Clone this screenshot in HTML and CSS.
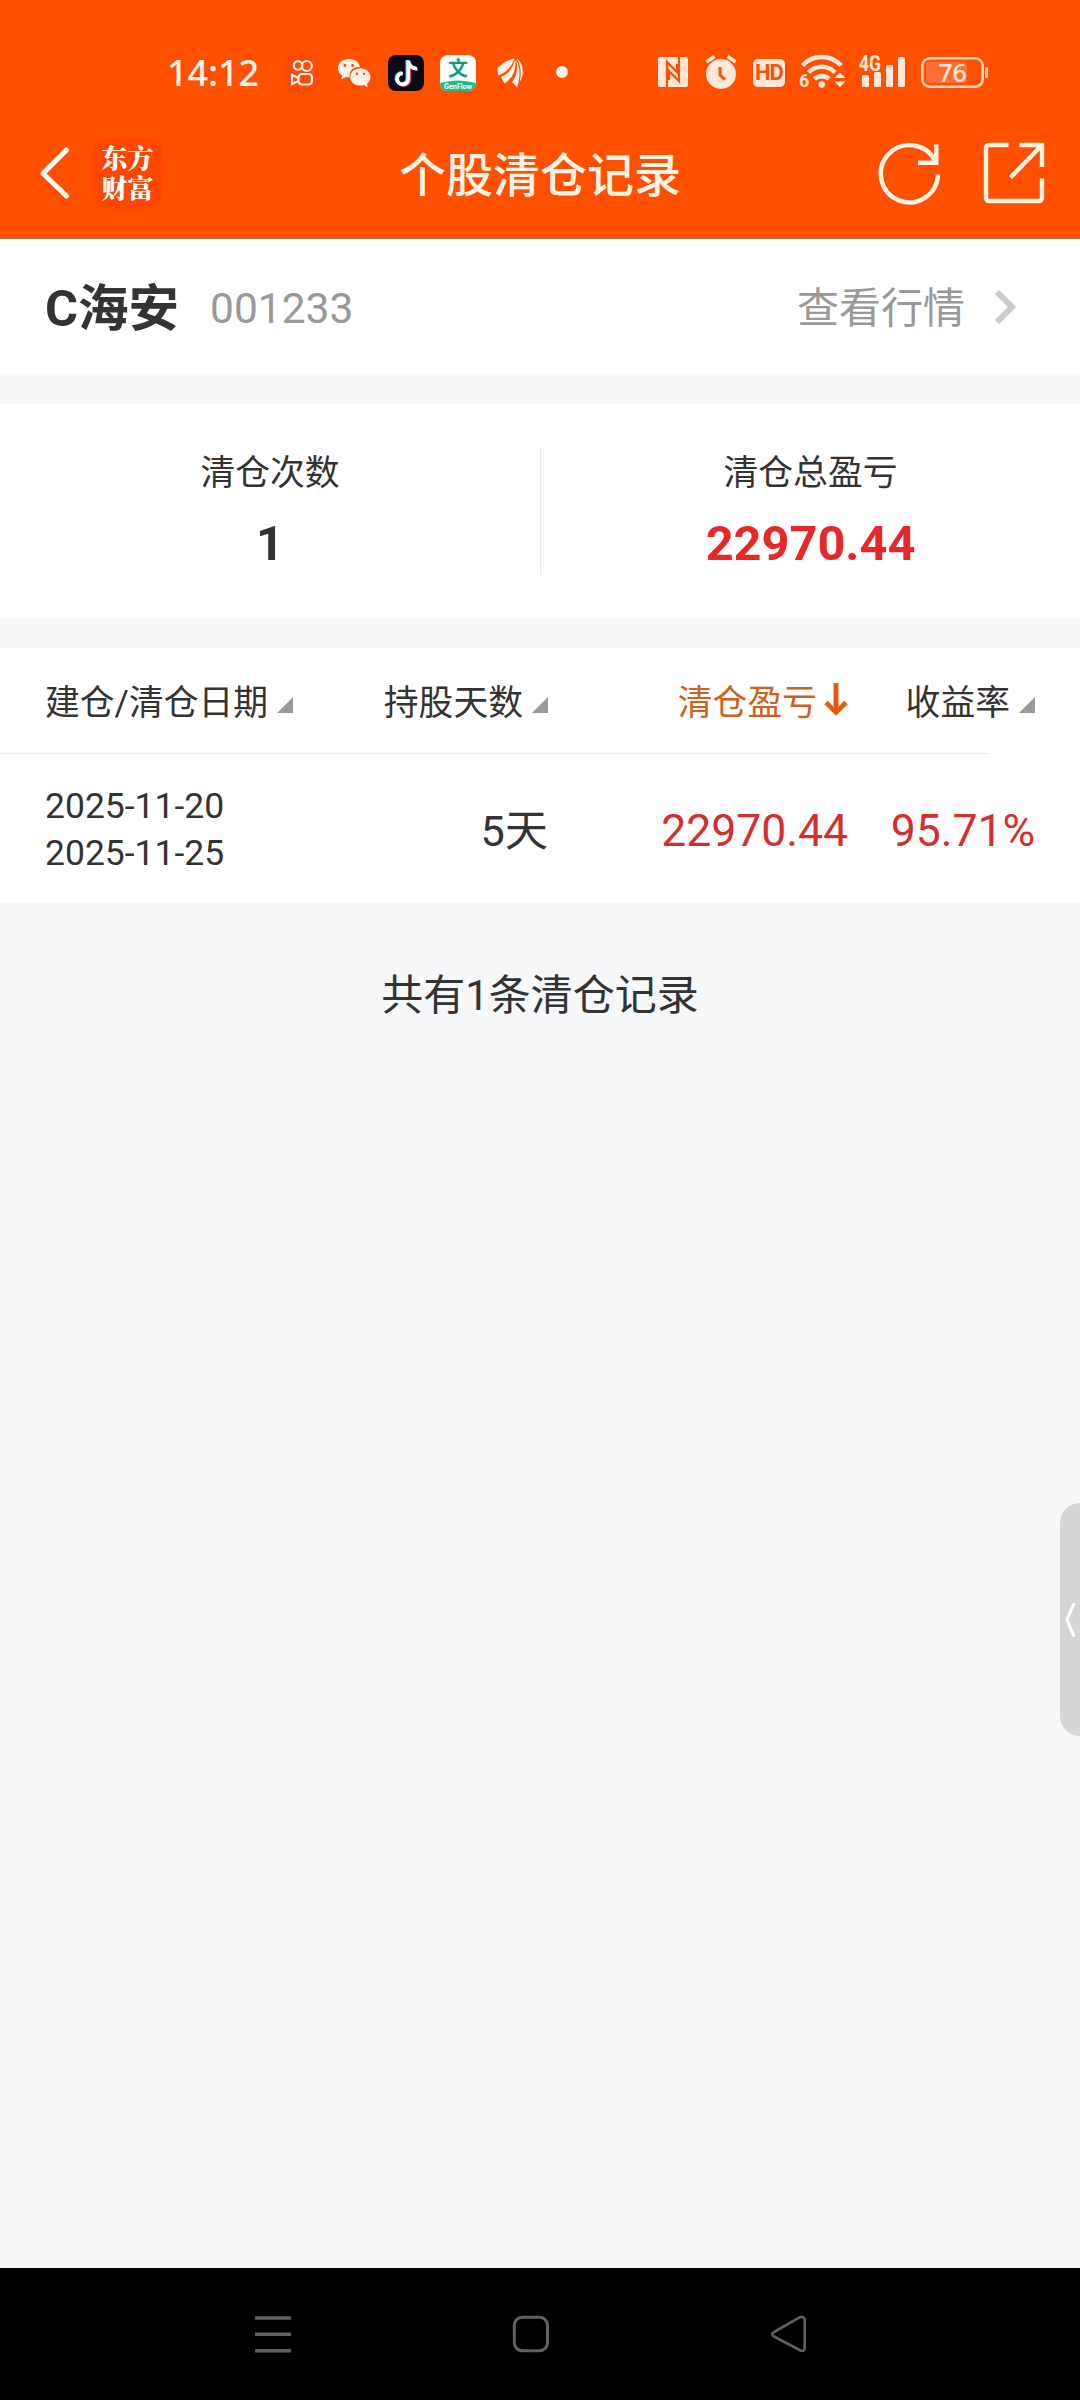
FILE: index.html
```html
<!DOCTYPE html>
<html lang="zh-CN">
<head>
<meta charset="utf-8">
<title>个股清仓记录</title>
<link rel="stylesheet" href="styles.css">
</head>
<body>
<div class="screen">
  <header class="top">
    <div class="status">
      <span class="time">14:12</span>
      <svg class="i-ks" width="36" height="36" viewBox="0 0 36 36" fill="none" stroke="#fff3ea" stroke-width="2.200"><rect width="36" height="36" rx="8" fill="#ff4906" stroke="none"/><circle cx="14" cy="10.500" r="4.300"/><circle cx="22.800" cy="11" r="5"/><rect x="14.500" y="19" width="13.500" height="10.500" rx="3.500"/><path d="M14.500 23 8 20v9l6.500-3"/></svg>
      <svg class="i-wx" width="35" height="36" viewBox="0 0 35 36"><path fill="#fff3ea" d="M12 4C5.400 4 1 8.200 1 13.200c0 3 1.600 5.600 4.200 7.300L4.300 24.500l4.300-2.400c1.300.3 2.400.4 3.900.4C12 15 17 11.600 23 11.800 21.800 7 17.500 4 12 4z"/><path fill="#fff3ea" d="M23.300 13.200c-5.600 0-10 3.800-10 8.700s4.400 8.700 10 8.700c1.300 0 2.300-.1 3.400-.5l4.200 2.200-1-3.600c2.300-1.700 3.500-4 3.500-6.800 0-4.900-4.500-8.700-10.100-8.700z"/><g fill="#ff5000"><circle cx="8" cy="10.500" r="1.400"/><circle cx="15.500" cy="10.500" r="1.400"/><circle cx="20" cy="18.700" r="1.200"/><circle cx="27" cy="18.700" r="1.200"/></g></svg>
      <svg class="i-dy" width="36" height="36" viewBox="0 0 36 36" fill="none" stroke-width="3.600"><rect width="36" height="36" rx="8" fill="#0b0a16"/><g stroke="#3fe3df"><path d="M19.300 5v18.500a5.500 5.500 0 1 1-5.500-5.700M19.300 6c.8 4 4 6.600 8.500 7"/></g><g stroke="#f5335b"><path d="M21.300 6.500V25a5.700 5.700 0 0 1-9 4M21.300 7.500c.8 4 4 6.600 8.500 7"/></g><path stroke="#fff" d="M20.300 5.500v18.500a5.500 5.500 0 1 1-5.500-5.500M20.300 6c.8 4.500 4 7.500 8.700 7.700"/></svg>
      <svg class="i-wen" width="36" height="36" viewBox="0 0 36 36"><defs><clipPath id="app"><rect width="36" height="36" rx="8"/></clipPath></defs><g clip-path="url(#app)"><path fill="#fff" d="M0 0h36v36H0z"/><path fill="#1dbd8b" d="M0 28q18-5 36 0v8H0z"/></g><text x="18" y="20.500" text-anchor="middle" class="wen">文</text><text x="18" y="33.500" text-anchor="middle" textLength="28" lengthAdjust="spacingAndGlyphs" class="gen">GenFlow</text></svg>
      <svg class="i-wing" width="27" height="36" viewBox="0 0 27 36" fill="#fff0e4"><path d="M17.500 3.500C11 4.500 5 9 .5 12.500L1 20.500C9 18 14.500 12 17.500 3.500z"/><path d="M18.200 4.500C15.500 14.500 10 19.500 4 22l3.500 6.500C16 23 19.500 15 18.200 4.500z"/><path d="M19.200 4.500C21.200 14 19.500 21 15 27l5 5.500C23.500 22 23.500 13 19.200 4.500z"/><path d="M20 3.500C24 11 24.500 19 22.800 27 27.500 20 27 9 20 3.500z"/></svg>
      <span class="dot"></span>
      <svg class="i-nfc" width="30" height="30" viewBox="0 0 30 30"><rect width="30" height="30" rx="2.500" fill="#ffe7da"/><path d="M9 30V5l10 10V7M21 0v24L11 14v9" fill="none" stroke="#ff5000" stroke-width="2.200"/></svg>
      <svg class="i-alarm" width="32" height="34" viewBox="0 0 32 34"><circle cx="16" cy="19" r="15" fill="#ffe7da"/><path d="m1.500 7 8-5.500M30.500 7l-8-5.500" stroke="#ffe7da" stroke-width="3.400"/><path d="M15 12v8l5 4.500" fill="none" stroke="#ff5000" stroke-width="3"/></svg>
      <span class="hd">HD</span>
      <svg class="i-wifi" width="48" height="36" viewBox="0 0 48 36" fill="none" stroke="#ffe7da" stroke-width="4.600"><path d="M4.500 11.500a26 26 0 0 1 38.500 0M10.500 18.500a18 18 0 0 1 26.500 0M16.500 25a10.500 10.500 0 0 1 14.500 0"/><circle cx="23.700" cy="30.500" r="3.200" fill="#ffe7da" stroke="none"/><path d="m36.500 24 5.500-5.500 5.500 5.500zM36.500 27.500h11L42 33z" fill="#ffe7da" stroke="none"/><text x="1" y="33" class="six">6</text></svg>
      <svg class="i-sig" width="48" height="36" viewBox="0 0 48 36" fill="#ffe7da"><rect x="4" y="21" width="7" height="12" rx="1.500"/><rect x="16" y="18" width="7" height="15" rx="1.500"/><rect x="28" y="11" width="7" height="22" rx="1.500"/><rect x="40" y="3" width="7" height="30" rx="1.500"/><text x="1" y="16.500" class="fourg" textLength="22" lengthAdjust="spacingAndGlyphs">4G</text></svg>
      <svg class="i-bat" width="68" height="32" viewBox="0 0 68 32"><rect x="1.300" y="1.300" width="60.400" height="28.400" rx="7.500" fill="none" stroke="#ffd2b8" stroke-width="2.600"/><rect x="5" y="5" width="41" height="21" rx="3" fill="#ff6f33"/><rect x="64" y="10" width="3" height="11" rx="1.500" fill="#ffd2b8"/><text x="31.500" y="24.500" text-anchor="middle" class="pct">76</text></svg>
    </div>
    <div class="bar">
      <div class="bar-left">
        <svg width="30" height="54" viewBox="0 0 30 54" fill="none" stroke="#fff" stroke-width="5" stroke-linecap="round" stroke-linejoin="round"><path d="M26.500 4 3 27.500 26.500 50"/></svg>
        <div class="logo"><span>东方</span><span>财富</span></div>
      </div>
      <h1 class="title">个股清仓记录</h1>
      <div class="bar-right">
        <svg width="64" height="64" viewBox="0 0 64 64" fill="none" stroke="#fff3e6" stroke-width="4.400"><path d="M62 33.500A28.600 28.600 0 1 1 58.500 19"/><path d="M60.300 3.500v18.300H42"/></svg>
        <svg width="64" height="64" viewBox="0 0 64 64" fill="none" stroke="#fff3e6" stroke-width="4.400"><path d="M26.500 4H7a3 3 0 0 0-3 3v50a3 3 0 0 0 3 3h50a3 3 0 0 0 3-3V37.500" /><path d="M37.500 4H60v22M60 4 28.500 36.500"/></svg>
      </div>
    </div>
  </header>

  <section class="stock">
    <div class="stock-id"><span class="name">C海安</span><span class="code">001233</span></div>
    <div class="quote"><span>查看行情</span><svg width="24" height="38" viewBox="0 0 24 38" fill="none" stroke="#ccc" stroke-width="6"><path d="m4 4 15 15L4 34"/></svg></div>
  </section>

  <section class="totals">
    <div class="total"><span class="label">清仓次数</span><span class="value">1</span></div>
    <div class="total total-pl"><span class="label">清仓总盈亏</span><span class="value red">22970.44</span></div>
  </section>

  <section class="table">
    <div class="row head">
      <div class="c1">建仓/清仓日期<i class="tri"></i></div>
      <div class="c2">持股天数<i class="tri"></i></div>
      <div class="c3 sorted">清仓盈亏<svg width="24" height="36" viewBox="0 0 24 36" fill="none" stroke="#e65a0c" stroke-width="5"><path d="M12 1v29"/><path d="m2 20.500 10 10 10-10" stroke-width="4.600"/></svg></div>
      <div class="c4">收益率<i class="tri"></i></div>
    </div>
    <div class="rule"></div>
    <div class="row data">
      <div class="c1 dates"><span>2025-11-20</span><span>2025-11-25</span></div>
      <div class="c2">5天</div>
      <div class="c3 loss">22970.44</div>
      <div class="c4 loss">95.71%</div>
    </div>
  </section>

  <p class="count">共有1条清仓记录</p>

  <nav class="nav">
    <svg width="38" height="38" viewBox="0 0 38 38" stroke="#606060" stroke-width="3.500"><path d="M1 3h36M1 19.300h36M1 35.700h36"/></svg>
    <svg width="38" height="38" viewBox="0 0 38 38" fill="none" stroke="#606060" stroke-width="3"><rect x="2.300" y="2.300" width="33.200" height="33.400" rx="8"/></svg>
    <svg width="38" height="38" viewBox="0 0 38 38" fill="none" stroke="#606060" stroke-width="2.600" stroke-linejoin="round"><path d="M4 17 30 2.200Q34.500 1 34.700 5v28q-.3 3.800-4.200 2.500L4 21.500q-3.500-2.300 0-4.500z"/></svg>
  </nav>
  <div class="drawer"><svg width="12" height="38" viewBox="0 0 12 38" fill="none" stroke="#fff" stroke-width="3" stroke-linecap="round" stroke-linejoin="round"><path d="M9.500 3.500 3 18.500l6.500 16"/></svg></div>
</div>
</body>
</html>
```
FILE: styles.css
```css
* { box-sizing: border-box; }
body { margin: 0; }
.screen {
  position: relative;
  display: flex;
  flex-direction: column;
  width: 1080px;
  height: 2400px;
  overflow: hidden;
  background: #f6f8fa;
  color: #333;
  font-family: Roboto, "Noto Sans CJK SC", sans-serif;
}
.screen svg { display: block; flex: none; overflow: visible; }

.top { height: 239px; background: #ff5000; border-bottom: 1px solid #ad7047; }
.status { display: flex; height: 108px; padding: 55px 0 0 167px; }
.time {
  width: 93px;
  margin: -6px 24px 0 0;
  font: 500 36px/47px "Noto Sans", sans-serif;
  color: #fff3ea;
}
.i-wx { margin-left: 17px; }
.i-dy, .i-wen { margin-left: 16px; }
.i-wing { margin-left: 21px; }
.dot { width: 12px; height: 12px; margin: 11px 0 0 32px; border-radius: 50%; background: #fff3ea; }
.i-nfc { margin: 2px 0 0 90px; }
.i-alarm { margin-left: 17px; }
.hd {
  width: 32px;
  height: 28px;
  margin: 4px 0 0 16px;
  border-radius: 5px;
  background: #ffe7da;
  color: #ff5000;
  font: 700 22px/28px Roboto, sans-serif;
  letter-spacing: -1px;
  text-align: center;
}
.i-wifi { margin: -1px 0 0 13px; }
.i-sig { margin: -1px 0 0 12px; }
.i-bat { margin: 2px 0 0 15px; }
.wen { font: 700 20px "Noto Sans CJK SC", sans-serif; fill: #109b78; }
.gen { font: 700 7px Inter, sans-serif; fill: #fff; }
.six { font: 700 18px Roboto, sans-serif; fill: #ffe7da; stroke: none; }
.fourg { font: 700 22px Roboto, sans-serif; }
.pct { font: 500 25px "Noto Sans", sans-serif; fill: #ffe7da; }

.bar {
  display: grid;
  grid-template-columns: 300px 1fr 300px;
  align-items: center;
  height: 130px;
}
.bar-left { display: flex; align-items: center; gap: 22px; padding-left: 40px; }
.logo {
  display: flex;
  flex-direction: column;
  width: 71px;
  height: 71px;
  padding-top: 4px;
  border-radius: 16px;
  background: #ff4700;
  color: #fff;
  font: 900 26px/30px "Noto Serif CJK SC", "Noto Sans CJK SC", sans-serif;
  text-align: center;
}
.title { margin: 0; padding-top: 6px; color: #fff3e6; font-size: 47px; font-weight: 500; line-height: 60px; text-align: center; }
.bar-right { display: flex; gap: 42px; padding-left: 96px; }

.stock {
  display: flex;
  justify-content: space-between;
  align-items: center;
  height: 135px;
  padding: 0 63px 0 45px;
  background: #fff;
}
.stock-id { display: flex; align-items: center; gap: 31px; padding-top: 5px; }
.name { font-size: 50.500px; font-weight: 700; line-height: 60px; }
.code { font-size: 42.500px; line-height: 60px; color: #999; }
.quote { display: flex; align-items: center; gap: 28px; font-size: 42px; line-height: 60px; color: #999; }
.quote span { padding-top: 5px; }

.totals { display: grid; grid-template-columns: 1fr 1fr; height: 214px; margin-top: 30px; padding: 43px 0; background: #fff; }
.total { display: flex; flex-direction: column; align-items: center; }
.total-pl { border-left: 1px solid #e8e8e8; }
.label { padding-top: 1px; font-size: 34.800px; line-height: 50px; }
.value { font-size: 48.700px; font-weight: 700; line-height: 60px; margin-top: 16px; }
.red { color: #e62828; }

.table { margin-top: 30px; height: 255px; background: #fff; }
.row { display: grid; grid-template-columns: 249px 254px 300px 1fr; padding: 0 45px; align-items: center; }
.head { height: 105px; padding-top: 4px; font-size: 34.800px; line-height: 50px; }
.head > div { display: flex; align-items: center; }
.c2, .c3, .c4 { justify-content: flex-end; text-align: right; }
.tri { width: 16px; height: 16px; margin: 5px 0 0 9px; background: #999; clip-path: polygon(100% 0, 100% 100%, 0 100%); }
.sorted { color: #d1601c; }
.sorted svg { margin: -5px 0 0 7px; }
.rule { width: 990px; height: 1px; background: #ececec; }
.data { height: 149px; padding-top: 4px; font-size: 43.200px; line-height: 60px; }
.dates { display: flex; flex-direction: column; margin-top: -2px; font-size: 35.500px; line-height: 47px; }
.data .c2 { padding-top: 2px; }
.loss { color: #d32f2f; font-size: 44.500px; padding-top: 1px; }

.count { margin: 63px 0 0; font-size: 42px; line-height: 60px; text-align: center; }

.nav { display: flex; justify-content: space-between; height: 132px; margin-top: auto; padding: 47px 272px 0 254px; background: #000; }
.drawer {
  position: absolute;
  right: 0;
  top: 1503px;
  display: flex;
  align-items: center;
  width: 20px;
  height: 233px;
  padding-left: 4px;
  border-radius: 20px 0 0 20px;
  background: #d5d6d7;
}
```
